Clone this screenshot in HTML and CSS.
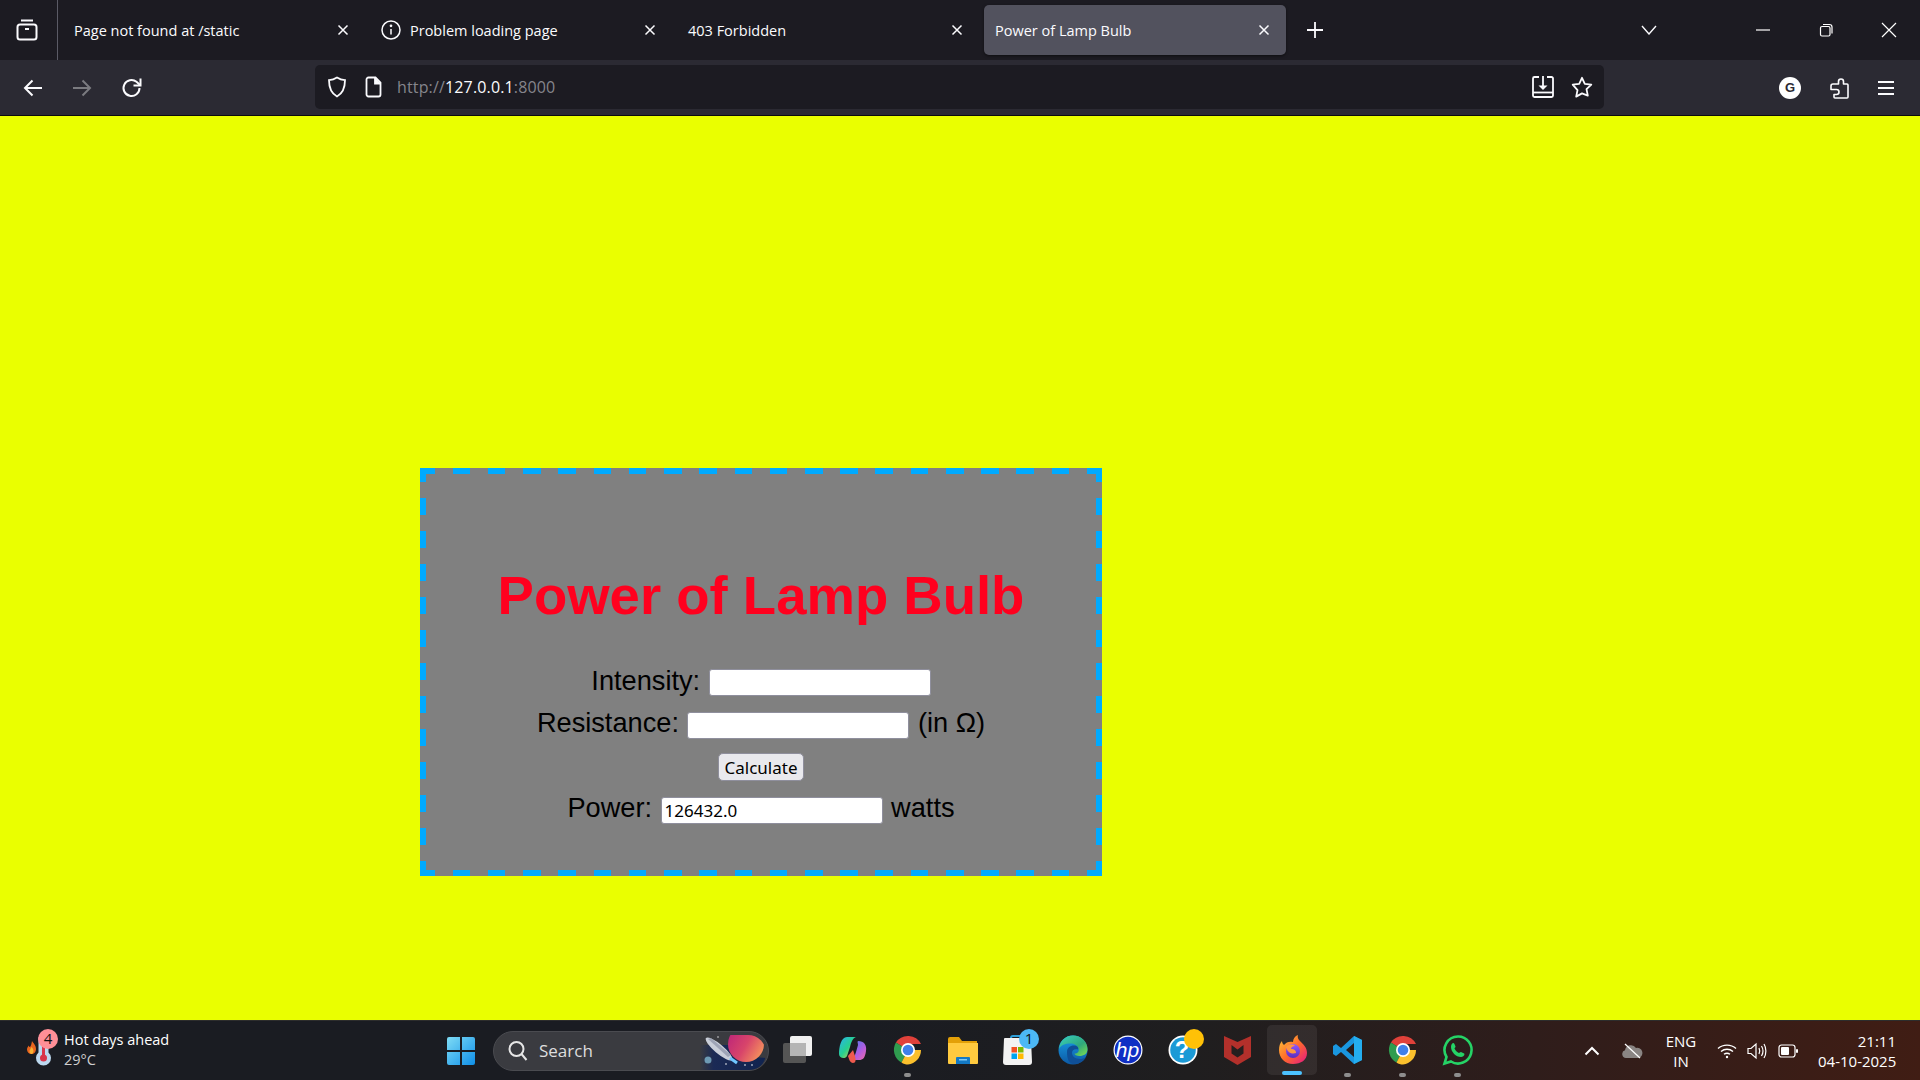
FILE: index.html
```html
<!DOCTYPE html>
<html lang="en">
<head>
<meta charset="utf-8">
<title>Power of Lamp Bulb</title>
<link rel="stylesheet" href="styles.css">
</head>
<body>
<header class="browser">
  <div class="tabstrip">
    <div class="tabgroup-btn">
      <svg class="ic" width="24" height="24" viewBox="0 0 24 24" fill="none" stroke="#fbfbfe" stroke-width="2"><path d="M6 2.500h12"/><rect x="2.500" y="6.500" width="19" height="15" rx="2.500"/><path d="M10 11h4"/></svg>
    </div>
    <div class="tab"><span class="tab-title">Page not found at /static</span><svg class="x" width="12" height="12" viewBox="0 0 12 12"><path d="M1.500 1.500l9 9M10.500 1.500l-9 9"/></svg></div>
    <div class="tab">
      <svg class="tab-ic" width="20" height="20" viewBox="0 0 20 20" fill="none" stroke="#fbfbfe" stroke-width="1.500"><circle cx="10" cy="10" r="9"/><path d="M10 9v5.500"/><circle cx="10" cy="5.800" r=".6"/></svg>
      <span class="tab-title">Problem loading page</span><svg class="x" width="12" height="12" viewBox="0 0 12 12"><path d="M1.500 1.500l9 9M10.500 1.500l-9 9"/></svg></div>
    <div class="tab"><span class="tab-title">403 Forbidden</span><svg class="x" width="12" height="12" viewBox="0 0 12 12"><path d="M1.500 1.500l9 9M10.500 1.500l-9 9"/></svg></div>
    <div class="tab tab-active"><span class="tab-title">Power of Lamp Bulb</span><svg class="x" width="12" height="12" viewBox="0 0 12 12"><path d="M1.500 1.500l9 9M10.500 1.500l-9 9"/></svg></div>
    <div class="newtab"><svg width="16" height="16" viewBox="0 0 16 16" stroke="#fbfbfe" stroke-width="1.800"><path d="M8 0v16M0 8h16"/></svg></div>
    <div class="spacer"></div>
    <div class="listall"><svg width="16" height="10" viewBox="0 0 16 10" fill="none" stroke="#fbfbfe" stroke-width="1.400"><path d="M1 1l7 8 7-8"/></svg></div>
    <div class="winbtn"><svg width="16" height="16" viewBox="0 0 16 16" stroke="#fff" stroke-width="1.200"><path d="M1 8h14"/></svg></div>
    <div class="winbtn"><svg width="16" height="16" viewBox="0 0 16 16" fill="none" stroke="#fff" stroke-width="1.200"><rect x="2.500" y="4.500" width="9.500" height="9.500" rx="1.500"/><path d="M5 2.500h6.500A2.500 2.500 0 0 1 14 5v6.500"/></svg></div>
    <div class="winbtn"><svg width="16" height="16" viewBox="0 0 16 16" stroke="#fff" stroke-width="1.200"><path d="M1 1l14 14M15 1L1 15"/></svg></div>
  </div>
  <div class="toolbar">
    <svg class="nav" width="20" height="20" viewBox="0 0 20 20" fill="none" stroke="#fbfbfe" stroke-width="2"><path d="M19 10H2M9.500 2.500L2 10l7.500 7.500"/></svg>
    <svg class="nav" width="20" height="20" viewBox="0 0 20 20" fill="none" stroke="#7b7b80" stroke-width="2"><path d="M1 10h17M10.500 2.500L18 10l-7.500 7.500"/></svg>
    <svg class="nav nav-last" width="22" height="22" viewBox="0 0 22 22" fill="none" stroke="#fbfbfe" stroke-width="2"><path d="M18.500 11a8 8 0 1 1-3-6.200L19 8"/><path d="M19.500 1.500V8.500H12.500"/></svg>
    <div class="urlbar">
      <svg class="url-shield" width="20" height="22" viewBox="0 0 20 22" fill="none" stroke="#fbfbfe" stroke-width="1.800"><path d="M10 1.500c2.500 1.600 5.200 2.400 8 2.600 0 8-2.500 13.500-8 16.400C4.500 17.600 2 12.100 2 4.100c2.800-.2 5.500-1 8-2.600z"/></svg>
      <svg class="url-page" width="18" height="22" viewBox="0 0 18 22" fill="none" stroke="#fbfbfe" stroke-width="1.800"><path d="M3.500 1.500h7l5 5v12a2 2 0 0 1-2 2h-10a2 2 0 0 1-2-2v-15a2 2 0 0 1 2-2z"/><path d="M10 1.500v6h5.500" fill="#fbfbfe"/></svg>
      <div class="url-text"><span class="dim">http://</span>127.0.0.1<span class="dim">:8000</span></div>
      <div class="spacer"></div>
      <svg class="url-save" width="24" height="24" viewBox="0 0 24 24" fill="none" stroke="#fbfbfe" stroke-width="1.800"><path d="M8 2H3.500A1.500 1.500 0 0 0 2 3.500v17A1.500 1.500 0 0 0 3.500 22h17a1.500 1.500 0 0 0 1.500-1.500v-17A1.500 1.500 0 0 0 20.500 2H16"/><path d="M2 17.500h20"/><path d="M12 1v11"/><path d="M7.500 10.500h9L12 15z" fill="#fbfbfe" stroke="none"/></svg>
      <svg class="url-star" width="22" height="22" viewBox="0 0 22 22" fill="none" stroke="#fbfbfe" stroke-width="1.800" stroke-linejoin="round"><path d="M11 1.800l2.800 6 6.500.8-4.800 4.500 1.300 6.500L11 17.400l-5.800 3.200 1.300-6.500L1.700 8.600l6.500-.8z"/></svg>
    </div>
    <div class="tools">
      <svg width="22" height="22" viewBox="0 0 22 22"><circle cx="11" cy="11" r="11" fill="#fff"/><text x="11" y="15" text-anchor="middle" class="g-letter">G</text></svg>
      <svg width="20" height="22" viewBox="0 0 20 22" fill="none" stroke="#fbfbfe" stroke-width="1.600" stroke-linejoin="round"><path d="M7 7h2.500V4.500a2.500 2.500 0 1 1 5 0V7h3.500a1 1 0 0 1 1 1v12a1 1 0 0 1-1 1H6a1 1 0 0 1-1-1v-2.500H7.500a2.500 2.500 0 0 0 0-5H2V9a2 2 0 0 1 2-2z"/></svg>
      <svg width="18" height="16" viewBox="0 0 18 16" stroke="#fbfbfe" stroke-width="1.800"><path d="M1 2h16M1 8h16M1 14h16"/></svg>
    </div>
  </div>
</header>

<main class="page">
  <section class="card">
    <h1 class="card-title">Power of Lamp Bulb</h1>
    <form class="calc">
      <div class="row"><label>Intensity:</label><input class="field" type="text"></div>
      <div class="row row-tight"><label>Resistance:</label><input class="field" type="text"><span>(in Ω)</span></div>
      <div class="row row-btn"><button class="calc-btn" type="button">Calculate</button></div>
      <div class="row row-tight"><label>Power:</label><input class="field" type="text" value="126432.0"><span>watts</span></div>
    </form>
  </section>
</main>

<footer class="taskbar">
  <div class="widget">
    <div class="widget-icon">
      <svg width="36" height="44" viewBox="0 0 36 44">
        <path d="M9 12c1 2 4 4 4 8 0 3-2 5-4.500 5S4 23 4 20.500c0-2 1-3 2-4 0 1 .5 1.500 1 1.500 1-1 1.500-3 2-6z" fill="#e8641e"/>
        <path d="M8.500 18c1 1 2 2.500 2 4s-1 3-2 3-2-1-2-2.500 1-2.500 2-4.500z" fill="#f9b233"/>
        <path d="M15.500 8h10v15.500a7.500 7.500 0 1 1-10 0z" fill="#bcd8ef"/>
        <circle cx="20.500" cy="29" r="3.500" fill="#d8344a"/>
        <rect x="19" y="14" width="3" height="14" fill="#d8344a"/>
        <circle cx="25" cy="10" r="10" fill="#ff8f97"/>
        <text x="25" y="15" text-anchor="middle" class="badge-num">4</text>
      </svg>
    </div>
    <div class="widget-text"><div class="w-title">Hot days ahead</div><div class="w-sub">29°C</div></div>
  </div>
  <div class="start">
    <svg width="30" height="30" viewBox="0 0 30 30">
      <defs><linearGradient id="winG" x1="0" y1="0" x2="1" y2="1"><stop offset="0" stop-color="#7fdcf5"/><stop offset="1" stop-color="#0f8fe8"/></linearGradient></defs>
      <path d="M1 3a2 2 0 0 1 2-2h11v13H1zM16 1h11a2 2 0 0 1 2 2v11H16zM1 16h13v13H3a2 2 0 0 1-2-2zM16 16h13v11a2 2 0 0 1-2 2H16z" fill="url(#winG)"/>
    </svg>
  </div>
  <div class="searchbox">
    <svg width="22" height="22" viewBox="0 0 22 22" fill="none" stroke="#e6e6e6" stroke-width="2"><circle cx="9.500" cy="9" r="7"/><path d="M14.500 14l5 6"/></svg>
    <span class="search-text">Search</span>
    <svg class="search-art" width="68" height="40" viewBox="0 0 68 40">
      <defs>
        <clipPath id="pillClip"><path d="M0 40V4h48a18 18 0 0 1 0 36z"/></clipPath>
        <linearGradient id="planetG" x1="0" y1="0" x2="1" y2=".6"><stop offset="0" stop-color="#b81f7c"/><stop offset=".6" stop-color="#d8456a"/><stop offset="1" stop-color="#f28a5e"/></linearGradient>
        <linearGradient id="navyG" x1="0" y1="0" x2="1" y2="0"><stop offset="0" stop-color="#1b2a55" stop-opacity="0"/><stop offset=".2" stop-color="#1b2a55"/><stop offset="1" stop-color="#10234f"/></linearGradient>
      </defs>
      <g clip-path="url(#pillClip)">
        <path d="M0 14h28c4 8 14 12 40 13v13H0z" fill="url(#navyG)"/>
        <circle cx="46" cy="13" r="18" fill="url(#planetG)"/>
        <ellipse cx="19" cy="18" rx="17" ry="4.500" transform="rotate(40 19 18)" fill="#c9ced9"/>
        <path d="M8 8l3-1 20 17-3 2z" fill="#8b93a6" opacity=".7"/>
        <path d="M30 27l7 5" stroke="#6fc6ff" stroke-width="3"/>
        <circle cx="8" cy="29" r="3.500" fill="#6d9ab4"/>
        <circle cx="26" cy="33" r=".8" fill="#fff"/><circle cx="45" cy="34" r=".8" fill="#fff"/><circle cx="52" cy="34" r=".8" fill="#fff"/><circle cx="18" cy="6" r=".7" fill="#fff"/>
      </g>
    </svg>
  </div>
  <div class="apps">
    <div class="app"><svg width="30" height="30" viewBox="0 0 30 30"><rect x="0" y="8" width="23" height="20" rx="2" fill="#555"/><rect x="7" y="1" width="22" height="20" rx="2" fill="#f0f0f0"/><rect x="7" y="8" width="16" height="13" fill="#b5b5b5"/></svg></div>
    <div class="app"><svg width="30" height="30" viewBox="0 0 30 30"><defs><linearGradient id="cpA" x1="0" y1="0" x2="1" y2="1"><stop offset="0" stop-color="#2ab3ee"/><stop offset=".5" stop-color="#27d08f"/><stop offset="1" stop-color="#f6d13c"/></linearGradient><linearGradient id="cpB" x1="0" y1="0" x2="1" y2="1"><stop offset="0" stop-color="#3d7ff2"/><stop offset=".6" stop-color="#b25ce0"/><stop offset="1" stop-color="#f06da5"/></linearGradient></defs><path d="M9 2h9c-3 1-5 5-6 10l-3 9c-1 3-8 3-8-2 0-7 2-17 8-17z" fill="url(#cpA)"/><path d="M20 6c6 0 9 4 8 10-1 7-3 9-7 9h-9c3-1 5-4 6-8l2-7c0-2-1-3 0-4z" fill="url(#cpB)"/><path d="M10 21c1 3 2 7 5 7s3-3 2-7l-2-6z" fill="#ef5a4e"/></svg></div>
    <div class="app dot"><svg width="30" height="30" viewBox="0 0 30 30"><use href="#chromeIcon"/></svg></div>
    <div class="app"><svg width="32" height="30" viewBox="0 0 32 30"><path d="M1 4a2 2 0 0 1 2-2h9l3 4h15v6H1z" fill="#e3a008"/><path d="M1 8h30v20a1 1 0 0 1-1 1H2a1 1 0 0 1-1-1z" fill="#ffca3f"/><path d="M10 22h12a1 1 0 0 1 1 1v6H9v-6a1 1 0 0 1 1-1z" fill="#1379c4"/><rect x="12" y="24" width="8" height="1.500" fill="#7fcaf5"/></svg></div>
    <div class="app"><svg width="30" height="30" viewBox="0 0 30 30"><path d="M8 4V3a2 2 0 0 1 2-2h8" fill="none" stroke="#2c9ed8" stroke-width="2"/><path d="M2 3h25a1 1 0 0 1 1 1l1 23a3 3 0 0 1-3 3H3a3 3 0 0 1-3-3L1 4a1 1 0 0 1 1-1z" fill="#f3f3f3"/><rect x="8.500" y="12" width="5.500" height="5.500" fill="#f25022"/><rect x="15" y="12" width="5.500" height="5.500" fill="#7fba00"/><rect x="8.500" y="18.500" width="5.500" height="5.500" fill="#00a4ef"/><rect x="15" y="18.500" width="5.500" height="5.500" fill="#ffb900"/><circle cx="26" cy="4" r="10" fill="#4cb8f5"/><text x="26" y="9" text-anchor="middle" class="badge-num">1</text></svg></div>
    <div class="app"><svg width="30" height="30" viewBox="0 0 30 30"><defs><linearGradient id="edA" x1="0" y1="0" x2="1" y2="1"><stop offset="0" stop-color="#3ad0c0"/><stop offset=".6" stop-color="#2fa87c"/><stop offset="1" stop-color="#7fe04e"/></linearGradient><linearGradient id="edB" x1="0" y1="0" x2="0" y2="1"><stop offset="0" stop-color="#1aa0e8"/><stop offset="1" stop-color="#0c59a4"/></linearGradient></defs><circle cx="15" cy="15" r="14.500" fill="url(#edB)"/><path d="M1 14C2 5 8 .5 15 .5c8 0 14.500 6 14.500 13.500 0 5-4 7-8 7-3 0-5-1-5-2.500 3 0 5-2 4-5-1-3-4-5-8-5C7 8.500 3 10 1 14z" fill="url(#edA)"/><path d="M9 17c0-4 3-6.500 7-6.500 3 0 5 2 4 4-4-1-6 1-6 3.500 0 3 3 6 8 6 2 0 4-.5 6-2-2 4-6 7-12 7-5 0-7-5-7-12z" fill="#0f4f97"/></svg></div>
    <div class="app"><svg width="30" height="30" viewBox="0 0 30 30"><circle cx="15" cy="15" r="14.500" fill="#fff"/><circle cx="15" cy="15" r="13.300" fill="#0f2fc4"/><text x="14.500" y="21.500" text-anchor="middle" class="hp-letters">hp</text></svg></div>
    <div class="app"><svg width="30" height="30" viewBox="0 0 30 30"><circle cx="15" cy="15" r="14.500" fill="#fff"/><circle cx="15" cy="15" r="12.800" fill="#1b9ad6"/><text x="14" y="23" text-anchor="middle" class="help-q">?</text><circle cx="26" cy="4" r="10" fill="#ffc107"/></svg></div>
    <div class="app"><svg width="27" height="30" viewBox="0 0 27 30"><path d="M0 1l13.500 6L27 1v21l-13.500 8L0 22z" fill="#b3302b"/><path d="M7.500 10l6 4.500 6-4.500v8.500l-6 4-6-4z" fill="#251f1f"/></svg></div>
    <div class="app app-active"><svg width="30" height="30" viewBox="0 0 30 30"><defs><linearGradient id="ffA" x1="0" y1="0" x2="1" y2="1"><stop offset="0" stop-color="#ffcd3a"/><stop offset=".5" stop-color="#ff6b2a"/><stop offset="1" stop-color="#e31587"/></linearGradient><linearGradient id="ffB" x1="0" y1="0" x2="0" y2="1"><stop offset="0" stop-color="#9059ff"/><stop offset="1" stop-color="#5b2dbc"/></linearGradient></defs><path d="M15 29C7 29 1 23 1 15c0-4 1-7 3-9 0 2 1 3 2 4 2-3 6-4 9-3 0-3 2-6 5-7-1 3 1 5 3 7 3 3 6 6 6 11 0 7-6 11-14 11z" fill="url(#ffA)"/><circle cx="15" cy="16" r="7" fill="url(#ffB)"/><path d="M8 12c3-3 7-3 9-1-2 0-4 1-4 3 3 0 5 1 5 4-3 1-8 1-10-6z" fill="#ff9640"/></svg></div>
    <div class="app dot"><svg width="30" height="30" viewBox="0 0 30 30"><path d="M21 1l8 4v20l-8 4L8 17l-5 4-3-2V11l3-2 5 4zM21 8l-8 7 8 7z" fill="#1a97e0"/><path d="M21 1l8 4v20l-8 4z" fill="#24aef0"/></svg></div>
    <div class="app dot"><svg width="30" height="30" viewBox="0 0 30 30"><defs><g id="chromeIcon"><path d="M15 15L2.900 7.500A14.500 14.500 0 0 1 28 9H15z" fill="#e0413a"/><path d="M15 15l-6.500 12.500A14.500 14.500 0 0 1 2.900 7.500z" fill="#2f9c4f"/><path d="M15 15H28a14.500 14.500 0 0 1-13 14.500c-2.400 0-4.500-.6-6.500-2z" fill="#fbc02d"/><circle cx="15" cy="15" r="7" fill="#fff"/><circle cx="15" cy="15" r="5.300" fill="#3f80ea"/></g></defs><use href="#chromeIcon"/></svg></div>
    <div class="app dot"><svg width="30" height="30" viewBox="0 0 30 30"><path d="M15 1.500A13.500 13.500 0 0 0 3.500 22L1.500 28.500 8 26.500A13.500 13.500 0 1 0 15 1.500z" fill="none" stroke="#25d366" stroke-width="2.600"/><path d="M10.500 8c1 0 1.500 2.500 2 3.500 0 1-1 1.500-1 2 1 2 2.500 3.500 4.500 4.500.5 0 1-1 2-1 1 .5 3.500 1.500 3.500 2 0 2-2 3-3.500 3-5 0-10-5-10-10 0-2 1-4 2.500-4z" fill="#25d366"/></svg></div>
  </div>
  <div class="spacer"></div>
  <div class="tray">
    <svg class="tray-chev" width="16" height="10" viewBox="0 0 16 10" fill="none" stroke="#fff" stroke-width="2"><path d="M1.500 8.500L8 2l6.500 6.500"/></svg>
    <svg class="tray-cloud" width="22" height="16" viewBox="0 0 22 16"><path d="M5 15a4 4 0 0 1-1-7.800A6 6 0 0 1 15 5a4.500 4.500 0 0 1 2.500 10z" fill="#8a8583"/><path d="M4 1l15 14" stroke="#fff" stroke-width="1.200"/></svg>
    <div class="tray-lang"><div>ENG</div><div>IN</div></div>
    <svg class="tray-wifi" width="20" height="16" viewBox="0 0 20 16" fill="none" stroke="#fff" stroke-width="1.400"><path d="M1 5.500c5-4.500 13-4.500 18 0M4 8.500c3.500-3 8.500-3 12 0M7 11.300c2-1.500 4-1.500 6 0"/><circle cx="10" cy="14" r="1.200" fill="#fff" stroke="none"/></svg>
    <svg class="tray-vol" width="20" height="18" viewBox="0 0 20 18" fill="none" stroke="#fff" stroke-width="1.200"><path d="M1 6.500h3l5-4.500v14l-5-4.500H1z"/><path d="M12 6c1 2 1 4 0 6M14.500 4c1.800 3 1.800 7 0 10M17 2c2.500 4 2.500 10 0 14"/></svg>
    <svg class="tray-bat" width="20" height="14" viewBox="0 0 20 14"><rect x="1" y="1" width="16" height="12" rx="2.500" fill="none" stroke="#fff" stroke-width="1.200"/><rect x="3" y="3" width="8" height="8" rx="1" fill="#fff"/><rect x="18" y="5" width="2" height="4" rx="1" fill="#fff"/></svg>
    <div class="tray-clock"><div>21:11</div><div>04-10-2025</div></div>
  </div>
</footer>
</body>
</html>
```

FILE: styles.css
```css
* { box-sizing: border-box; }
html, body { margin: 0; height: 100%; }
body {
  width: 1920px;
  height: 1080px;
  overflow: hidden;
  display: flex;
  flex-direction: column;
  font-family: "Liberation Sans", Arial, sans-serif;
  background: #eaff00;
}
.spacer { flex: 1; }

/* Browser chrome */
.browser { flex: none; }
.tabstrip {
  height: 60px;
  background: #1c1b22;
  display: flex;
  align-items: center;
  gap: 5px;
  color: #fbfbfe;
  font-family: "Open Sans", "Noto Sans", sans-serif;
  font-size: 14.5px;
}
.tabgroup-btn {
  width: 58px;
  height: 60px;
  flex: none;
  border-right: 1px solid #5b5b66;
  display: flex;
  align-items: center;
  justify-content: center;
  padding-right: 3px;
}
.tab {
  height: 50px;
  width: 302px;
  flex: none;
  border-radius: 5px;
  display: flex;
  align-items: center;
  padding: 0 11px;
}
.tab-ic { margin-right: 9px; flex: none; }
.tab-title { flex: 1; white-space: nowrap; }
.x { flex: none; margin-right: 5px; }
.x path { stroke: #fbfbfe; stroke-width: 1.500; fill: none; }
.tab-active { background: #52525e; box-shadow: 0 1px 3px rgba(0,0,0,.5); }
.newtab { margin-left: 16px; display: flex; }
.listall { display: flex; margin-right: 74px; }
.winbtn { width: 63px; display: flex; justify-content: center; margin-left: -5px; }

.toolbar {
  height: 56px;
  background: #2b2a33;
  border-bottom: 1px solid #0c0c0d;
  display: flex;
  align-items: center;
  padding-left: 23px;
}
.nav { margin-right: 29px; flex: none; }
.nav-last { margin-right: 0; }
.urlbar {
  width: 1289px;
  height: 44px;
  margin-left: 172px;
  margin-top: -1px;
  background: #1c1b22;
  border-radius: 5px;
  display: flex;
  align-items: center;
  padding: 0 11px 0 12px;
}
.url-shield { margin-right: 18px; }
.url-page { margin-right: 14px; }
.url-text { font-family: "Open Sans", "Noto Sans", sans-serif; font-size: 16px; color: #fbfbfe; letter-spacing: .15px; }
.dim { color: #85858c; }
.url-save { margin-right: 16px; }
.tools { display: flex; align-items: center; margin-left: 175px; gap: 28px; }
.g-letter { font-family: "Liberation Sans", sans-serif; font-weight: 700; font-size: 13px; fill: #2b2a33; }

/* Page */
.page { flex: 1; padding: 352px 0 0 420px; min-height: 0; }
.card {
  width: 682px;
  height: 408px;
  padding-top: 96px;
  text-align: center;
  color: #000;
  background-color: #808080;
  background-image:
    repeating-linear-gradient(90deg, #00aaff -2.62px, #00aaff 15px, transparent 15px, transparent 32.62px),
    repeating-linear-gradient(90deg, #00aaff -2.62px, #00aaff 15px, transparent 15px, transparent 32.62px),
    repeating-linear-gradient(180deg, #00aaff -2.5px, #00aaff 14px, transparent 14px, transparent 30.5px),
    repeating-linear-gradient(180deg, #00aaff -2.5px, #00aaff 14px, transparent 14px, transparent 30.5px);
  background-size: 100% 6px, 100% 6px, 6px 100%, 6px 100%;
  background-position: left top, left bottom, left top, right top;
  background-repeat: no-repeat;
}
.card-title {
  margin: 0 0 41px;
  color: #ff001e;
  font-size: 54.5px;
  line-height: 64px;
  font-weight: 700;
}
.calc {
  font-size: 27.2px;
  display: flex;
  flex-direction: column;
  gap: 16px;
}
.row {
  display: flex;
  justify-content: center;
  align-items: center;
  gap: 8.5px;
  height: 27px;
  line-height: 27px;
}
.row label, .row span { position: relative; top: -2px; }
.row-tight label, .row-tight span { top: -3px; }
.row-btn { height: 28px; margin-top: -2px; }
.field {
  width: 222px;
  height: 27px;
  border: 1px solid #8f8f9d;
  border-radius: 3px;
  background: #fff;
  padding: 0 3px;
  font-family: "Noto Sans", sans-serif;
  font-size: 17px;
  color: #000;
}
.calc-btn {
  width: 86px;
  height: 28px;
  padding: 0;
  border: 1px solid #8f8f9d;
  border-radius: 5px;
  background: #e9e9ed;
  font-family: "Noto Sans", sans-serif;
  font-size: 17px;
  color: #000;
}

/* Taskbar */
.taskbar {
  flex: none;
  height: 60px;
  border-top: 1px solid #2d2d2d;
  background: linear-gradient(90deg, #1a1c22 0%, #1a1c22 45%, #1f1e1f 62%, #2f1d1b 80%, #401d14 100%);
  display: flex;
  align-items: center;
  color: #fff;
  font-family: "Open Sans", "Noto Sans", sans-serif;
}
.widget { width: 446px; flex: none; display: flex; align-items: center; padding-left: 23px; }
.widget-icon { width: 40px; height: 44px; margin-right: 1px; flex: none; }
.widget-text { font-size: 14.5px; line-height: 20px; margin-top: -2px; }
.w-sub { color: #cfcfcf; }
.badge-num { font-family: "Open Sans", sans-serif; font-size: 15px; fill: #111; }
.start { width: 30px; height: 30px; flex: none; margin-right: 17px; }
.searchbox {
  width: 276px;
  height: 40px;
  flex: none;
  border-radius: 20px;
  background: #3a3b40;
  border: 1px solid #4a4b50;
  display: flex;
  align-items: center;
  padding-left: 13px;
  position: relative;
  overflow: hidden;
}
.search-text { margin-left: 10px; font-size: 17px; color: #dedede; }
.search-art { position: absolute; right: 0; top: -1px; }
.apps { display: flex; align-items: center; margin-left: 1px; margin-top: -2px; }
.app {
  width: 55px;
  height: 52px;
  flex: none;
  display: flex;
  align-items: center;
  justify-content: center;
  position: relative;
}
.app svg { overflow: visible; }
.dot::after {
  content: "";
  position: absolute;
  bottom: -1px;
  left: 24px;
  width: 7px;
  height: 4px;
  border-radius: 2px;
  background: #8e8e8e;
}
.app-active::before {
  content: "";
  position: absolute;
  left: 2px;
  top: 1px;
  width: 50px;
  height: 50px;
  background: rgba(255,255,255,.07);
  border-radius: 5px;
}
.app-active svg { position: relative; }
.app-active::after {
  content: "";
  position: absolute;
  bottom: 1px;
  left: 17px;
  width: 20px;
  height: 4px;
  border-radius: 2px;
  background: #4cc2ff;
}
.hp-letters { font-family: "Liberation Sans", sans-serif; font-style: italic; font-size: 21px; fill: #fff; }
.help-q { font-family: "Liberation Sans", sans-serif; font-weight: 700; font-size: 24px; fill: #fff; }
.tray { display: flex; align-items: center; padding-right: 24px; }
.tray-chev { margin-right: 21px; }
.tray-cloud { margin-right: 13px; }
.tray-lang { width: 50px; text-align: center; font-size: 15px; line-height: 20px; margin-right: 11px; }
.tray-wifi { margin-right: 10px; }
.tray-vol { margin-right: 11px; }
.tray-bat { margin-right: 20px; }
.tray-clock { text-align: right; font-size: 15px; line-height: 20px; width: 78px; white-space: nowrap; }
```
